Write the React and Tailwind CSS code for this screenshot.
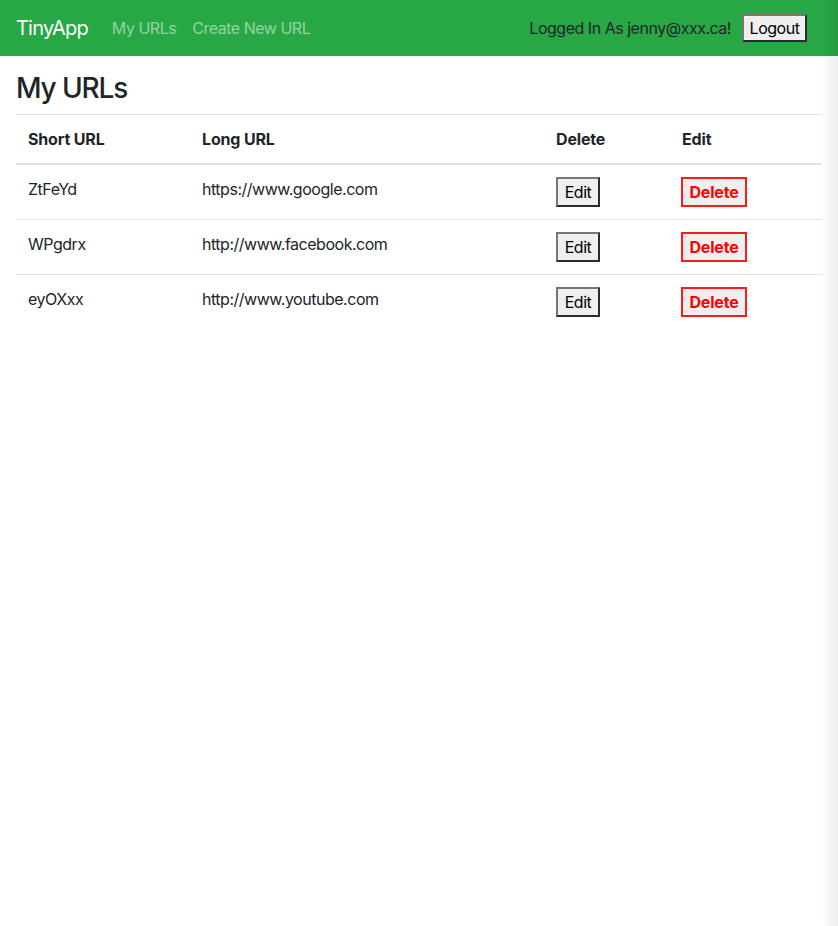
import React from 'react';

const urls = [
  { short: 'ZtFeYd', long: 'https://www.google.com' },
  { short: 'WPgdrx', long: 'http://www.facebook.com' },
  { short: 'eyOXxx', long: 'http://www.youtube.com' },
];

export default function App() {
  return (
    <div className="relative min-h-[926px] bg-white text-[#212529] font-['Inter','Liberation_Sans',sans-serif] text-base tracking-[-0.03em]">
      {/* navbar */}
      <nav className="flex items-center h-14 bg-[#28a745] pl-4 pr-[31px]">
        <span className="text-xl text-white mr-4 tracking-[-0.04em]">TinyApp</span>
        <a className="px-2 text-white/50">My URLs</a>
        <a className="px-2 text-white/50">Create New URL</a>
        <div className="ml-auto flex items-center">
          <span className="mr-[11px]">Logged In As jenny@xxx.ca!</span>
          <button className="w-[65px] h-7 bg-[#efefef] text-black border-2 border-t-[#767676] border-l-[#767676] border-b-[#2b2b2b] border-r-[#2b2b2b] leading-none">
            Logout
          </button>
        </div>
      </nav>

      {/* main */}
      <main className="px-4 pt-4">
        <h3 className="text-[28px] leading-[1.2] font-medium mb-2 tracking-[-0.04em]">My URLs</h3>
        <table className="w-full border-collapse text-left">
          <thead>
            <tr className="border-t border-[#dee2e6] border-b-2 tracking-[-0.01em]">
              <th className="w-[174px] p-3 font-bold">Short URL</th>
              <th className="w-[354px] p-3 font-bold">Long URL</th>
              <th className="w-[126px] p-3 font-bold">Delete</th>
              <th className="p-3 font-bold">Edit</th>
            </tr>
          </thead>
          <tbody>
            {urls.map((u, i) => (
              <tr key={u.short} className={i > 0 ? 'border-t border-[#dee2e6]' : ''}>
                <td className="p-3 align-top leading-6">{u.short}</td>
                <td className="p-3 align-top leading-6">{u.long}</td>
                <td className="p-3 align-top">
                  <button className="w-[44px] h-[30px] bg-[#efefef] text-black border-2 border-t-[#767676] border-l-[#767676] border-b-[#2b2b2b] border-r-[#2b2b2b] leading-none">
                    Edit
                  </button>
                </td>
                <td className="pl-[11px] pr-3 py-3 align-top">
                  <button className="w-[66px] h-[30px] bg-[#efefef] text-[#ff0000] font-bold tracking-[-0.01em] border-2 border-[#ff1a1a] leading-none">
                    Delete
                  </button>
                </td>
              </tr>
            ))}
          </tbody>
        </table>
      </main>

      {/* right edge shade */}
      <div className="pointer-events-none absolute top-0 right-0 bottom-0 w-4 bg-gradient-to-r from-transparent to-black/[0.07]" />
    </div>
  );
}
